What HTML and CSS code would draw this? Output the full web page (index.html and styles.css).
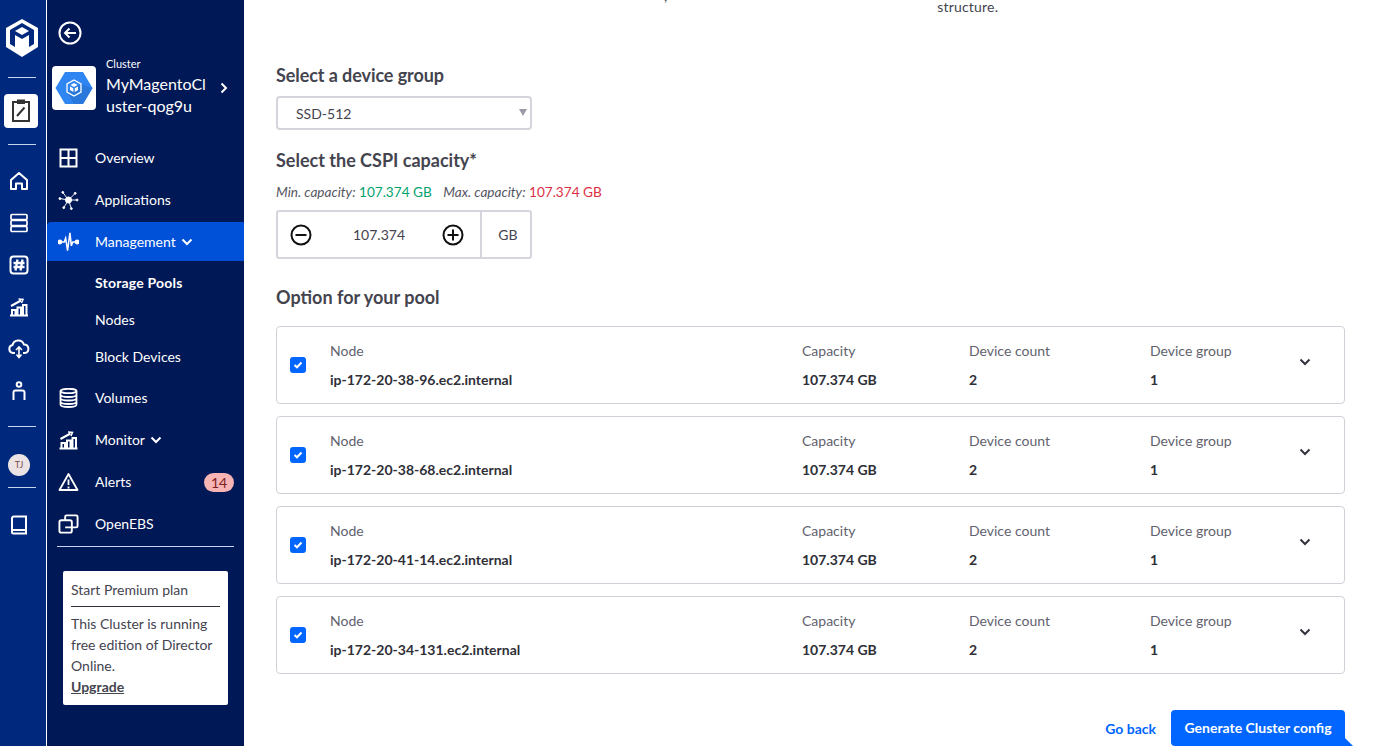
FILE: index.html
```html
<!DOCTYPE html>
<html lang="en">
<head>
  <meta charset="UTF-8" />
  <meta name="viewport" content="width=device-width, initial-scale=1.0"/>
  <title>Storage Pools</title>
  <link rel="stylesheet" href="styles.css">
</head>
<body>
  <nav class="rail">
    <svg class="rail-logo" width="34" height="40" viewBox="0 0 34 40">
      <path class="fill-white" d="M17 1 33 10V29L17 39 1 29V10Z"/>
      <path class="fill-rail" d="M17 5 29 12V26L24 29V17L17 21 10 17V29L5 26V12Z"/>
      <path class="fill-white" d="M17 9 24 13 17 17 10 13Z"/>
    </svg>
    <hr class="rail-line rail-line-first">
    <div class="rail-current">
      <svg width="20" height="24" viewBox="0 0 20 24" fill="none" stroke="#333" stroke-width="2">
        <rect x="2" y="3" width="16" height="19" fill="#fff"/>
        <path d="M7 1.500H13V4H7Z" fill="#333"/>
        <path d="M6 17 13.500 8.500"/>
      </svg>
    </div>
    <hr class="rail-line">
    <div class="rail-icons">
      <svg width="20" height="20" viewBox="0 0 20 20" fill="none" stroke="#fff" stroke-width="2"><path d="M2 9 10 2 18 9V18H13V12.500H7V18H2Z" stroke-linejoin="round"/></svg>
      <svg width="20" height="20" viewBox="0 0 20 20" fill="none" stroke="#fff" stroke-width="1.700"><rect x="2" y="1.500" width="16" height="5" rx="1"/><rect x="2" y="7.500" width="16" height="5" rx="1"/><rect x="2" y="13.500" width="16" height="5" rx="1"/></svg>
      <svg width="20" height="20" viewBox="0 0 20 20" fill="none" stroke="#fff" stroke-width="2"><rect x="1.500" y="1.500" width="17" height="17" rx="3"/><path d="M8.500 4.500 6.500 15.500M13.500 4.500 11.500 15.500M4.500 8H15.500M4.500 12H15.500" stroke-width="2.300"/></svg>
      <svg width="20" height="20" viewBox="0 0 20 20" fill="none" stroke="#fff" stroke-width="2"><path d="M1 18.500H19M3 18V13H6.500V18M8.500 18V10.500H12V18M14 18V8H17.500V18M2 9 12 3.500"/><path d="M9.500 2 14 2.500 12.500 6" stroke-width="1.500"/></svg>
      <svg width="22" height="20" viewBox="0 0 22 20" fill="none" stroke="#fff" stroke-width="2"><path d="M7 14H5A4 4 0 0 1 4.500 6.100 6 6 0 0 1 16 5.500 4.300 4.300 0 0 1 17 14H15"/><path d="M11 8V18M8 11 11 8 14 11M8.500 15.500 11 18.500 13.500 15.500" stroke-width="1.600"/></svg>
      <svg width="20" height="20" viewBox="0 0 20 20" fill="none" stroke="#fff" stroke-width="2"><circle cx="10" cy="3.500" r="2.300"/><path d="M4.500 19V11.500A2 2 0 0 1 6.500 9.500H13.500A2 2 0 0 1 15.500 11.500V19"/></svg>
    </div>
    <hr class="rail-line">
    <div class="rail-avatar">TJ</div>
    <hr class="rail-line">
    <svg class="rail-book" width="18" height="20" viewBox="0 0 18 20" fill="none" stroke="#fff" stroke-width="2"><path d="M2 17V3A2 2 0 0 1 4 1.500H16V18.500H3.500A1.500 1.500 0 0 1 2 17ZM2 15H16"/></svg>
  </nav>

  <aside class="sidebar">
    <svg class="back" width="24" height="24" viewBox="0 0 24 24" fill="none" stroke="#fff"><circle cx="12" cy="12" r="10.500" stroke-width="2"/><path d="M18 12H7M11.500 7.500 7 12 11.500 16.500" stroke-width="2"/></svg>
    <div class="cluster">
      <div class="cluster-logo">
        <svg width="38" height="34" viewBox="0 0 38 34">
          <path fill="#2f86f2" d="M10 1H28L37.500 17 28 33H10L.5 17Z"/>
          <path fill="#2a78dc" d="M26 13 37.500 17 28 33H19L12 21Z"/>
          <path fill="none" stroke="#fff" stroke-width="1.300" d="M19 9 26 13V21L19 25 12 21V13Z"/>
          <path fill="#fff" d="M19 12 22.500 14 19 16 15.500 14ZM15 15.500 18.300 17.300V21L15 19ZM23 15.500 19.700 17.300V21L23 19Z"/>
        </svg>
      </div>
      <div class="cluster-text">
        <div class="cluster-label">Cluster</div>
        <div class="cluster-name">MyMagentoCl<br>uster-qog9u</div>
      </div>
      <svg class="cluster-arrow" width="10" height="12" viewBox="0 0 10 12" fill="none" stroke="#fff" stroke-width="2"><path d="M2.500 1.500 7 6 2.500 10.500"/></svg>
    </div>

    <ul class="menu">
      <li class="menu-item">
        <svg width="21" height="20" viewBox="0 0 21 20" fill="none" stroke="#fff" stroke-width="2"><rect x="2.500" y="1.500" width="16" height="17"/><path d="M10.500 1.500V18.500M2.500 10H18.500"/></svg>
        Overview
      </li>
      <li class="menu-item">
        <svg width="22" height="22" viewBox="0 0 22 22" fill="#fff" stroke="#fff"><circle cx="11" cy="11" r="3.200"/><path d="M11 11 5 3M11 11 18 4M11 11 2 9.500M11 11H20M11 11 6 19M11 11 14 20" stroke-width="1"/><circle cx="5" cy="3" r="1"/><circle cx="18" cy="4" r="1"/><circle cx="2" cy="9.500" r="1"/><circle cx="20" cy="11" r="1"/><circle cx="6" cy="19" r="1"/><circle cx="14" cy="20" r="1"/></svg>
        Applications
      </li>
      <li class="menu-item menu-item-active">
        <svg width="22" height="22" viewBox="0 0 22 22" fill="none" stroke="#fff" stroke-width="1.600"><path d="M3 11H6.500L8 7 10 20 12.500 1.500 14 15 15.500 11H19"/><circle cx="2" cy="11" r="1.700" fill="#fff"/><circle cx="20" cy="11" r="1.700" fill="#fff"/></svg>
        Management
        <svg class="caret" width="12" height="8" viewBox="0 0 12 8" fill="none" stroke="#fff" stroke-width="2"><path d="M1.500 1.500 6 6 10.500 1.500"/></svg>
      </li>
      <li class="submenu">
        <div class="submenu-item submenu-item-active">Storage Pools</div>
        <div class="submenu-item">Nodes</div>
        <div class="submenu-item">Block Devices</div>
      </li>
      <li class="menu-item">
        <svg width="21" height="20" viewBox="0 0 21 20" fill="none" stroke="#fff" stroke-width="1.800"><ellipse cx="10.500" cy="3" rx="8" ry="2.200"/><path d="M2.500 3V16.500C2.500 18 6 19 10.500 19S18.500 18 18.500 16.500V3M2.500 6.500C2.500 8 6 9 10.500 9S18.500 8 18.500 6.500M2.500 10C2.500 11.500 6 12.500 10.500 12.500S18.500 11.500 18.500 10M2.500 13.500C2.500 15 6 16 10.500 16S18.500 15 18.500 13.500"/></svg>
        Volumes
      </li>
      <li class="menu-item">
        <svg width="20" height="20" viewBox="0 0 20 20" fill="none" stroke="#fff" stroke-width="2"><path d="M1 18.500H19M3 18V13H6.500V18M8.500 18V10.500H12V18M14 18V8H17.500V18M2 9 12 3.500"/><path d="M9.500 2 14 2.500 12.500 6" stroke-width="1.500"/></svg>
        Monitor
        <svg class="caret" width="12" height="8" viewBox="0 0 12 8" fill="none" stroke="#fff" stroke-width="2"><path d="M1.500 1.500 6 6 10.500 1.500"/></svg>
      </li>
      <li class="menu-item">
        <svg width="20" height="20" viewBox="0 0 20 20" fill="none" stroke="#fff" stroke-width="1.800"><path d="M10 2 19 18H1Z" stroke-linejoin="round"/><path d="M10 7.500V13M10 14.500V16.500"/></svg>
        Alerts
        <span class="badge">14</span>
      </li>
      <li class="menu-item">
        <svg width="22" height="22" viewBox="0 0 22 22" fill="none" stroke="#fff" stroke-width="2"><rect x="1.500" y="7" width="13" height="13" rx="2"/><path d="M7.500 7V3.500A1.500 1.500 0 0 1 9 2H19A1.500 1.500 0 0 1 20.500 3.500V13A1.500 1.500 0 0 1 19 14.500H14.500M7.500 14.500H14.500"/></svg>
        OpenEBS
      </li>
    </ul>
    <hr class="sidebar-line">
    <div class="promo">
      <div class="promo-title">Start Premium plan</div>
      <p class="promo-text">This Cluster is running free edition of Director Online.</p>
      <a class="promo-link">Upgrade</a>
    </div>
  </aside>

  <main class="main">
    <div class="intro">
      <span class="intro-mark">,</span>
      <span class="intro-text">structure.</span>
    </div>

    <h2 class="title title-group">Select a device group</h2>
    <div class="select">SSD-512</div>

    <h2 class="title title-capacity">Select the CSPI capacity*</h2>
    <p class="limits"><em>Min. capacity:</em> <span class="min">107.374 GB</span> <em class="max-label">Max. capacity:</em> <span class="max">107.374 GB</span></p>
    <div class="stepper">
      <div class="stepper-main">
        <svg width="22" height="22" viewBox="0 0 22 22" fill="none" stroke="#111" stroke-width="2"><circle cx="11" cy="11" r="9.500"/><path d="M5.500 11H16.500"/></svg>
        <span class="stepper-value">107.374</span>
        <svg width="22" height="22" viewBox="0 0 22 22" fill="none" stroke="#111" stroke-width="2"><circle cx="11" cy="11" r="9.500"/><path d="M5.500 11H16.500M11 5.500V16.500"/></svg>
      </div>
      <div class="stepper-unit">GB</div>
    </div>

    <h2 class="title title-pool">Option for your pool</h2>
    <div class="pools">
      <div class="pool">
        <span class="check"><svg width="10" height="8" viewBox="0 0 10 8" fill="none" stroke="#fff" stroke-width="2"><path d="M1.500 4 4 6.300 8.500 1.500"/></svg></span>
        <div class="cell"><span class="cell-label">Node</span><strong>ip-172-20-38-96.ec2.internal</strong></div>
        <div class="cell"><span class="cell-label">Capacity</span><strong>107.374 GB</strong></div>
        <div class="cell"><span class="cell-label">Device count</span><strong>2</strong></div>
        <div class="cell"><span class="cell-label">Device group</span><strong>1</strong></div>
        <svg class="pool-arrow" width="12" height="8" viewBox="0 0 12 8" fill="none" stroke="#33333d" stroke-width="2"><path d="M1.500 1.500 6 6 10.500 1.500"/></svg>
      </div>
      <div class="pool">
        <span class="check"><svg width="10" height="8" viewBox="0 0 10 8" fill="none" stroke="#fff" stroke-width="2"><path d="M1.500 4 4 6.300 8.500 1.500"/></svg></span>
        <div class="cell"><span class="cell-label">Node</span><strong>ip-172-20-38-68.ec2.internal</strong></div>
        <div class="cell"><span class="cell-label">Capacity</span><strong>107.374 GB</strong></div>
        <div class="cell"><span class="cell-label">Device count</span><strong>2</strong></div>
        <div class="cell"><span class="cell-label">Device group</span><strong>1</strong></div>
        <svg class="pool-arrow" width="12" height="8" viewBox="0 0 12 8" fill="none" stroke="#33333d" stroke-width="2"><path d="M1.500 1.500 6 6 10.500 1.500"/></svg>
      </div>
      <div class="pool">
        <span class="check"><svg width="10" height="8" viewBox="0 0 10 8" fill="none" stroke="#fff" stroke-width="2"><path d="M1.500 4 4 6.300 8.500 1.500"/></svg></span>
        <div class="cell"><span class="cell-label">Node</span><strong>ip-172-20-41-14.ec2.internal</strong></div>
        <div class="cell"><span class="cell-label">Capacity</span><strong>107.374 GB</strong></div>
        <div class="cell"><span class="cell-label">Device count</span><strong>2</strong></div>
        <div class="cell"><span class="cell-label">Device group</span><strong>1</strong></div>
        <svg class="pool-arrow" width="12" height="8" viewBox="0 0 12 8" fill="none" stroke="#33333d" stroke-width="2"><path d="M1.500 1.500 6 6 10.500 1.500"/></svg>
      </div>
      <div class="pool">
        <span class="check"><svg width="10" height="8" viewBox="0 0 10 8" fill="none" stroke="#fff" stroke-width="2"><path d="M1.500 4 4 6.300 8.500 1.500"/></svg></span>
        <div class="cell"><span class="cell-label">Node</span><strong>ip-172-20-34-131.ec2.internal</strong></div>
        <div class="cell"><span class="cell-label">Capacity</span><strong>107.374 GB</strong></div>
        <div class="cell"><span class="cell-label">Device count</span><strong>2</strong></div>
        <div class="cell"><span class="cell-label">Device group</span><strong>1</strong></div>
        <svg class="pool-arrow" width="12" height="8" viewBox="0 0 12 8" fill="none" stroke="#33333d" stroke-width="2"><path d="M1.500 1.500 6 6 10.500 1.500"/></svg>
      </div>
    </div>

    <div class="actions">
      <a class="go-back">Go back</a>
      <button class="generate">Generate Cluster config</button>
    </div>
  </main>
</body>
</html>
```

FILE: styles.css
```css
* {
  box-sizing: border-box;
}
html, body {
  height: 746px;
  overflow: hidden;
}
body {
  margin: 0;
  display: flex;
  font-family: Lato, sans-serif;
  font-size: 14px;
  color: #44444f;
  background: #fff;
}
svg {
  display: block;
  flex: none;
}
.fill-white {
  fill: #fff;
}
.fill-rail {
  fill: #00287c;
}

/* far left rail */
.rail {
  width: 47px;
  flex: none;
  display: flex;
  flex-direction: column;
  align-items: center;
  padding-right: 3px;
  background: #00287c;
  border-right: 1px solid #fff;
}
.rail-logo {
  margin-top: 18px;
}
.rail-line {
  width: 28px;
  height: 1px;
  margin: 0;
  border: none;
  background: #c5d3f0;
}
.rail-line-first {
  margin-top: 19px;
}
.rail-current {
  width: 34px;
  height: 34px;
  margin: 16px 1px 16px 0;
  display: flex;
  align-items: center;
  justify-content: center;
  background: #fff;
  border-radius: 4px;
}
.rail-icons {
  display: flex;
  flex-direction: column;
  align-items: center;
  gap: 22px;
  margin: 26px 5px 25px 0;
}
.rail-avatar {
  width: 22px;
  height: 22px;
  margin: 27px 5px 11px 0;
  border-radius: 50%;
  background: #ece4e4;
  color: #7a4a4a;
  font-size: 9px;
  line-height: 22px;
  text-align: center;
}
.rail-book {
  margin: 27px 5px 0 0;
}

/* cluster menu */
.sidebar {
  width: 197px;
  flex: none;
  background: #001855;
  color: #fff;
}
.back {
  margin: 21px 0 0 11px;
}
.cluster {
  display: flex;
  margin: 0 0 0 5px;
  height: 92px;
  position: relative;
}
.cluster-logo {
  width: 44px;
  height: 44px;
  margin-top: 21px;
  display: flex;
  align-items: center;
  justify-content: center;
  background: #fff;
  border-radius: 4px;
}
.cluster-text {
  width: 108px;
  margin: 12px 0 0 10px;
}
.cluster-label {
  font-size: 11px;
  line-height: 14px;
}
.cluster-name {
  font-size: 16px;
  line-height: 22px;
  margin-top: 2px;
}
.cluster-arrow {
  margin: 37px 0 0 5px;
}
.menu {
  list-style: none;
  margin: 0;
  padding: 0;
}
.menu-item {
  height: 42px;
  display: flex;
  align-items: center;
  padding: 0 10px 0 11px;
  line-height: 42px;
}
.menu-item > svg:first-child {
  margin-right: 16px;
  width: 21px;
}
.menu-item-active {
  height: 39px;
  margin: 1px 0 2px;
  background: #0050d8;
  border-top-left-radius: 4px;
}
.caret {
  margin-left: 5px;
}
.submenu {
  padding: 1px 0 2px 48px;
}
.submenu-item {
  height: 37px;
  line-height: 37px;
}
.submenu-item-active {
  font-weight: 700;
  letter-spacing: .2px;
}
.badge {
  margin-left: auto;
  width: 30px;
  height: 19px;
  border-radius: 10px;
  background: #f7b4b4;
  color: #7c1d1d;
  line-height: 19px;
  text-align: center;
}
.sidebar-line {
  width: 177px;
  height: 1px;
  margin: 1px 0 0 10px;
  border: none;
  background: #c5d3f0;
}
.promo {
  width: 165px;
  height: 134px;
  margin: 24px 0 0 16px;
  padding: 11px 8px 0;
  background: #fff;
  border-radius: 2px;
  color: #44444f;
  line-height: 21px;
}
.promo-title {
  height: 25px;
  line-height: 15px;
  border-bottom: 1px solid #33333d;
}
.promo-text {
  margin: 6px 0 0;
}
.promo-link {
  display: block;
  font-weight: 700;
  text-decoration: underline;
}

/* main form */
.main {
  flex: 1;
  min-width: 0;
  padding: 0 33px 0 32px;
}
.intro {
  height: 14px;
  display: flex;
  line-height: 13px;
}
.intro-mark {
  margin: -11px 0 0 388px;
}
.intro-text {
  margin-left: 270px;
  letter-spacing: .2px;
}
.title {
  margin: 0;
  font-size: 18px;
  font-weight: 700;
  line-height: 24px;
  color: #44444f;
}
.title-group {
  margin-top: 49px;
  letter-spacing: -.08px;
}
.select {
  position: relative;
  width: 256px;
  height: 34px;
  margin-top: 9px;
  padding-left: 18px;
  border: 2px solid #d5d5dd;
  border-radius: 4px;
  line-height: 32px;
}
.select::after {
  content: "";
  position: absolute;
  right: 3px;
  top: 11px;
  border-left: 4px solid transparent;
  border-right: 4px solid transparent;
  border-top: 7px solid #9a9aa8;
}
.title-capacity {
  margin-top: 18px;
}
.limits {
  margin: 11px 0 0;
  font-size: 13.600px;
  line-height: 18px;
}
.limits em {
  color: #55555f;
}
.max-label {
  margin-left: 8px;
}
.min {
  color: #00a36c;
}
.max {
  color: #dc2f45;
}
.stepper {
  width: 256px;
  height: 49px;
  margin-top: 9px;
  display: flex;
  border: 2px solid #d5d5dd;
  border-radius: 3px;
}
.stepper-main {
  flex: 1;
  display: flex;
  align-items: center;
  justify-content: space-between;
  padding: 0 16px 0 12px;
  border-right: 2px solid #d5d5dd;
}
.stepper-value {
  margin-left: 4px;
}
.stepper-unit {
  width: 48px;
  padding-left: 4px;
  line-height: 45px;
  text-align: center;
}
.title-pool {
  margin-top: 26px;
}
.pools {
  display: flex;
  flex-direction: column;
  gap: 12px;
  margin-top: 17px;
}
.pool {
  height: 78px;
  display: grid;
  grid-template-columns: 40px 472px 167px 181px 149px 12px;
  align-items: center;
  padding-left: 13px;
  border: 1px solid #d0d0d8;
  border-radius: 4px;
}
.check {
  width: 16px;
  height: 16px;
  display: flex;
  align-items: center;
  justify-content: center;
  background: #0066ff;
  border-radius: 3px;
}
.cell {
  display: flex;
  flex-direction: column;
  gap: 11px;
  line-height: 18px;
}
.cell-label {
  color: #62626e;
}
.cell strong {
  color: #2f2f38;
}
.pool-arrow {
  margin-top: -6px;
}
.actions {
  display: flex;
  justify-content: flex-end;
  align-items: center;
  gap: 15px;
  margin-top: 36px;
}
.go-back {
  color: #0066ff;
  font-weight: 700;
}
.generate {
  position: relative;
  width: 174px;
  height: 36px;
  padding: 0 0 2px;
  border: none;
  border-radius: 4px 4px 0 4px;
  background: #0066ff;
  color: #fff;
  font: 700 14px Lato, sans-serif;
}
.generate::after {
  content: "";
  position: absolute;
  left: 100%;
  bottom: 0;
  border-bottom: 8px solid #0066ff;
  border-right: 8px solid transparent;
}
```
